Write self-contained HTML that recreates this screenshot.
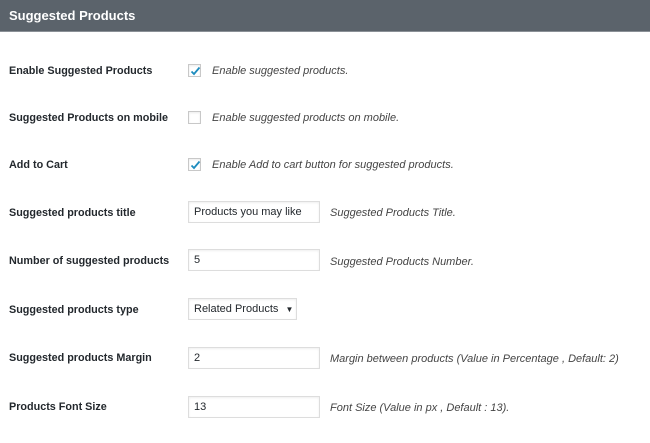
<!DOCTYPE html><html><head><style>
body{margin:0;width:650px;height:443px;background:#fff;font-family:"Liberation Sans",sans-serif;position:relative;overflow:hidden;color:#23282d}
.h{position:absolute;left:0;top:0;width:650px;height:32px;background:#5b636b;color:#fff;font-weight:bold;font-size:13px;line-height:32px;padding-left:9px;box-sizing:border-box;border-bottom:1px solid #8a9096}
.l{position:absolute;left:9px;font-size:10.8px;font-weight:bold;color:#23282d}
.d{position:absolute;font-size:11px;font-style:italic;color:#444}
.cb{position:absolute;left:188px;width:13px;height:13px;border:1px solid #c8c8c8;box-sizing:border-box;background:#fff;box-shadow:inset 0 1px 2px rgba(0,0,0,.08)}
.cb svg{position:absolute;left:0;top:0}
.i{position:absolute;left:188px;width:132px;height:22px;border:1px solid #ddd;box-sizing:border-box;font-size:11px;line-height:20px;padding-left:5px;box-shadow:inset 0 1px 2px rgba(0,0,0,.07)}
</style></head><body>
<div class="h">Suggested Products</div>
<div class="l" style="top:65px">Enable Suggested Products</div>
<div class="cb" style="top:64px"><svg width="13" height="13"><path d="M2.5 6.5L5 9L10.5 2.5" stroke="#1e8cbe" stroke-width="1.8" fill="none"/></svg></div>
<div class="d" style="left:212px;top:65px">Enable suggested products.</div>
<div class="l" style="top:112px">Suggested Products on mobile</div>
<div class="cb" style="top:111px"></div>
<div class="d" style="left:212px;top:112px">Enable suggested products on mobile.</div>
<div class="l" style="top:159px">Add to Cart</div>
<div class="cb" style="top:158px"><svg width="13" height="13"><path d="M2.5 6.5L5 9L10.5 2.5" stroke="#1e8cbe" stroke-width="1.8" fill="none"/></svg></div>
<div class="d" style="left:212px;top:159px">Enable Add to cart button for suggested products.</div>
<div class="l" style="top:207px">Suggested products title</div>
<div class="i" style="top:201px">Products you may like</div>
<div class="d" style="left:330px;top:207px">Suggested Products Title.</div>
<div class="l" style="top:255px">Number of suggested products</div>
<div class="i" style="top:249px">5</div>
<div class="d" style="left:330px;top:256px">Suggested Products Number.</div>
<div class="l" style="top:304px">Suggested products type</div>
<div class="i" style="top:298px;width:109px">Related Products <span style="font-size:8px;margin-left:4px">▼</span></div>
<div class="l" style="top:352px">Suggested products Margin</div>
<div class="i" style="top:347px">2</div>
<div class="d" style="left:330px;top:353px">Margin between products (Value in Percentage , Default: 2)</div>
<div class="l" style="top:401px">Products Font Size</div>
<div class="i" style="top:396px">13</div>
<div class="d" style="left:330px;top:402px">Font Size (Value in px , Default : 13).</div>
</body></html>
